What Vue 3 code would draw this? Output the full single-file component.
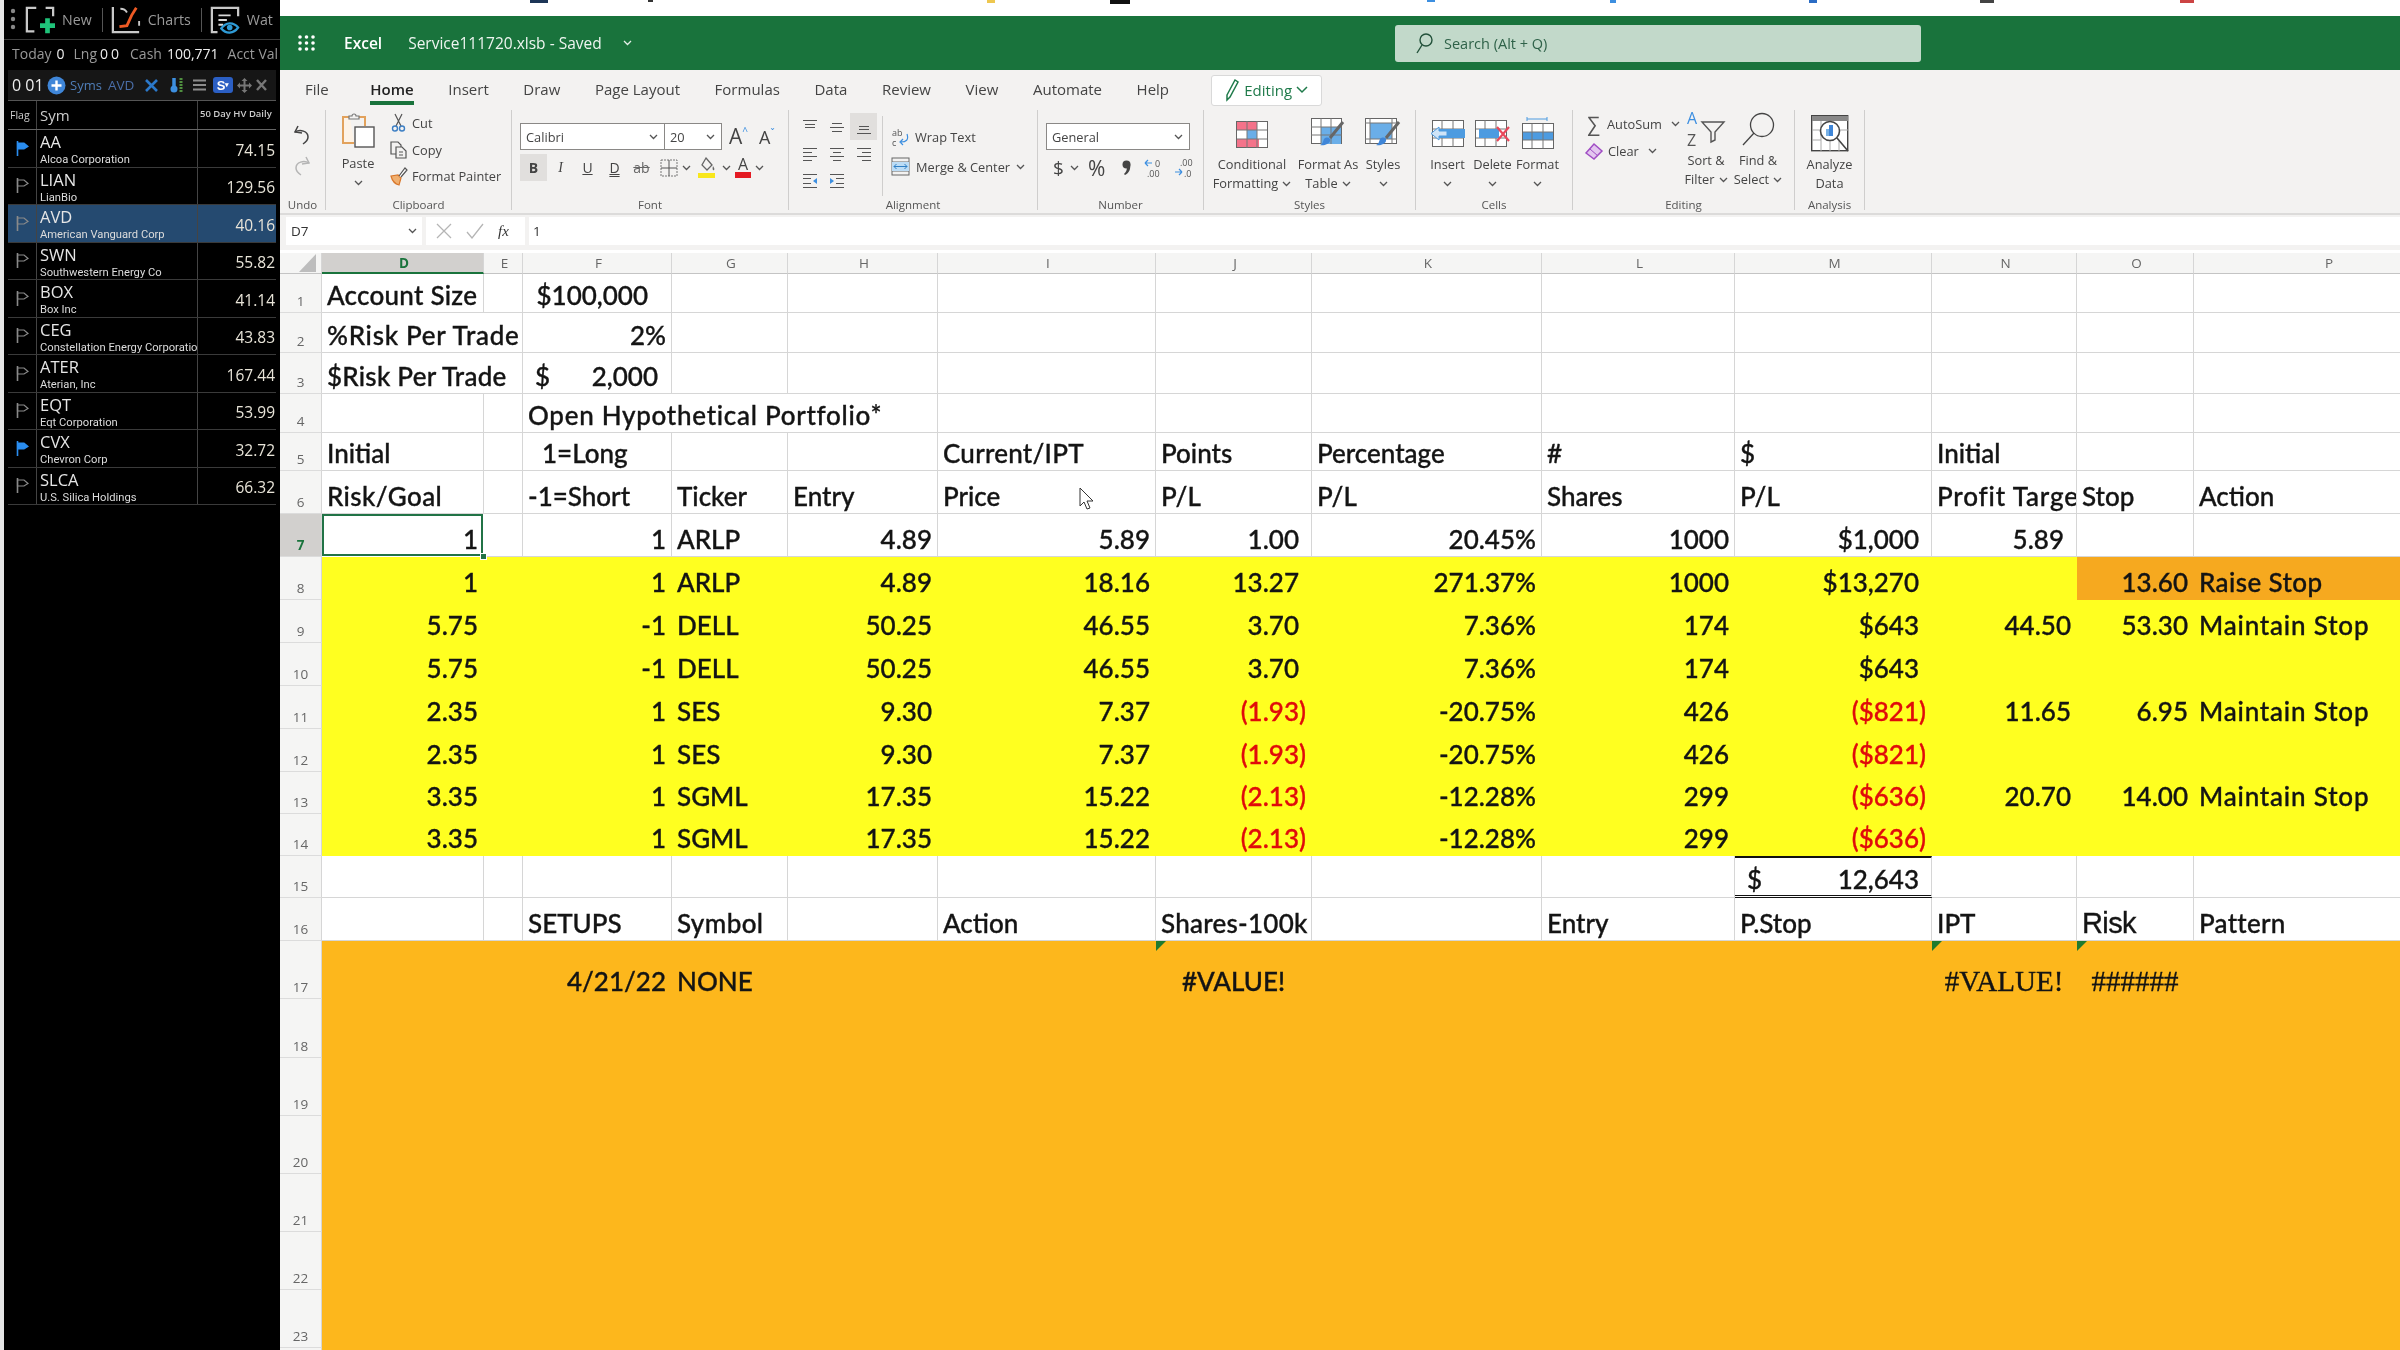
<template>
  <div class="screen">
    <aside class="side">
      <div class="side-tools">
        <svg class="grip" width="6" height="24" viewBox="0 0 6 24"><circle cx="3" cy="3" r="2.2"/><circle cx="3" cy="11" r="2.2"/><circle cx="3" cy="19" r="2.2"/></svg>
        <svg width="30" height="30" viewBox="0 0 32 32" fill="none"><path d="M12 3H2v25h8M22 3h8v9" stroke="#c9c9c9" stroke-width="2.4"/><path d="M24 14v16M16 22h16" stroke="#1fc47a" stroke-width="5"/></svg>
        <span class="tool-txt">New</span>
        <i class="tool-sep"></i>
        <svg width="30" height="30" viewBox="0 0 32 32" fill="none"><path d="M2 2v27h28" stroke="#c9c9c9" stroke-width="2.4"/><path d="M9 23l8-1 5-11 5-8" stroke="#ee5a24" stroke-width="3"/><path d="M10 4c4 0 6 2 7 4M30 17v5" stroke="#c9c9c9" stroke-width="2"/></svg>
        <span class="tool-txt">Charts</span>
        <i class="tool-sep"></i>
        <svg width="30" height="30" viewBox="0 0 32 32" fill="none"><path d="M8 29H2V3h28v9" stroke="#c9c9c9" stroke-width="2.4"/><path d="M9 11h13M9 16h9M9 21h5" stroke="#d8d8d8" stroke-width="2"/><path d="M12 25c5-7 13-7 18-1-5 7-13 7-18 1z" stroke="#2f9bd6" stroke-width="2.4"/><circle cx="21" cy="24" r="3" fill="#2f9bd6"/></svg>
        <span class="tool-txt">Wat</span>
      </div>
      <div class="side-status">
        <span>Today</span><b>0</b><span class="lng">Lng</span><b class="tight">0</b><b class="tight">0</b><span class="cash">Cash</span><b>100,771</b><span class="acct">Acct Val</span>
      </div>
      <div class="side-bar">
        <b class="counts">0 01</b>
        <svg width="19" height="19" viewBox="0 0 19 19"><circle cx="9.500" cy="9.500" r="9" fill="#3f86d8"/><path d="M9.500 4.500v10M4.500 9.500h10" stroke="#fff" stroke-width="2.400"/></svg>
        <span class="syms">Syms</span>
        <span class="avd">AVD</span>
        <svg class="bar-x" width="13" height="13" viewBox="0 0 13 13"><path d="M1 1l11 11M12 1L1 12" stroke="#2b78c9" stroke-width="2.600"/></svg>
        <svg class="therm" width="15" height="16" viewBox="0 0 15 16"><path d="M4 1v9" stroke="#3d8fe0" stroke-width="3.500"/><circle cx="4" cy="12" r="3.500" fill="#3d8fe0"/><path d="M11 1v14" stroke="#4f8f3f" stroke-width="3" stroke-dasharray="2 1"/></svg>
        <svg class="bar-lines" width="13" height="12" viewBox="0 0 13 12"><path d="M0 1.500h13M0 6h13M0 10.500h13" stroke="#8d8d8d" stroke-width="2"/></svg>
        <span class="s-btn">S<i>▾</i></span>
        <svg width="15" height="15" viewBox="0 0 15 15" fill="#777"><path d="M7.500 0l3 3h-6zM7.500 15l-3-3h6zM0 7.500l3-3v6zM15 7.500l-3 3v-6z"/><path d="M6.500 2h2v11h-2z"/><path d="M2 6.500h11v2H2z"/></svg>
        <svg width="11" height="12" viewBox="0 0 11 12"><path d="M1 1l9 10M10 1L1 11" stroke="#777" stroke-width="2.400"/></svg>
      </div>
      <div class="wl-table">
        <div class="wl-head wl-row">
          <div class="wl-flag wl-flagtxt">Flag</div>
          <div class="wl-sym wl-symtxt">Sym</div>
          <div class="wl-val wl-valtxt">50 Day HV Daily</div>
        </div>
        <div v-for="s in stocks" :key="s.sym" class="wl-row" :class="{ active: s.sym === 'AVD' }">
          <div class="wl-flag">
            <svg width="13" height="15" viewBox="0 0 13 15" fill="none">
              <path d="M1.500 0v15" :stroke="s.flag ? '#2a8df0' : '#8a8a8a'" stroke-width="1.600"/>
              <path d="M1.500 2H8l4 3.500L8 8H1.500z" :fill="s.flag ? '#2a8df0' : 'none'" :stroke="s.flag ? '#2a8df0' : '#8a8a8a'" stroke-width="1.200"/>
            </svg>
          </div>
          <div class="wl-sym">
            <div class="tick">{{ s.sym }}</div>
            <div class="cname">{{ s.name }}</div>
          </div>
          <div class="wl-val">{{ s.val }}</div>
        </div>
      </div>
    </aside>

    <main class="xl">
      <svg class="strip" width="2120" height="16" viewBox="0 0 2120 16">
        <rect x="250" y="0" width="18" height="3" fill="#1d3557"/>
        <rect x="368" y="0" width="5" height="2" fill="#333"/>
        <rect x="707" y="0" width="8" height="3" fill="#eec74f"/>
        <rect x="830" y="0" width="20" height="4" fill="#111"/>
        <rect x="1147" y="0" width="8" height="2" fill="#3d8fe0"/>
        <rect x="1330" y="0" width="6" height="3" fill="#3d8fe0"/>
        <rect x="1529" y="0" width="8" height="3" fill="#2b6cc4"/>
        <rect x="1700" y="0" width="14" height="3" fill="#444"/>
        <rect x="1900" y="0" width="14" height="3" fill="#c44"/>
      </svg>

      <header class="title">
        <svg class="waffle" width="17" height="16" viewBox="0 0 17 16" fill="#fff"><circle v-for="d in dots" :key="d[0] + '-' + d[1]" :cx="d[0]" :cy="d[1]" r="1.800"/></svg>
        <b class="app">Excel</b>
        <span class="doc">Service111720.xlsb  -  Saved</span>
        <Chev color="#e4efe8" class="doc-chev"/>
        <div class="search">
          <svg width="18" height="22" viewBox="0 0 18 22" fill="none" stroke="#22513a" stroke-width="1.400"><circle cx="11" cy="8" r="6"/><path d="M7 13l-5 8"/></svg>
          <span>Search (Alt + Q)</span>
        </div>
      </header>

      <nav class="tabs">
        <span v-for="t in tabs" :key="t" class="tab" :class="{ on: t === 'Home', file: t === 'File' }">{{ t }}</span>
        <span class="editing">
          <svg width="16" height="24" viewBox="0 0 16 24" fill="none" stroke="#1f7a4a" stroke-width="1.500"><path d="M3 17L11 2l3 2-8 15-3 3z"/></svg>
          Editing
          <svg width="12" height="8" viewBox="0 0 12 8" fill="none" stroke="#1f7a4a" stroke-width="1.500"><path d="M1 1l5 5 5-5"/></svg>
        </span>
      </nav>

      <section class="ribbon">
        <div class="grp g-undo">
          <div class="body col-c">
            <svg class="i-undo" width="18" height="20" viewBox="0 0 18 20" fill="none" stroke="#444" stroke-width="1.500"><path d="M5 1L2 7l7 1"/><path d="M2 7c5-3 13-1 13 5 0 3-2 5-5 7"/></svg>
            <svg class="i-redo" width="18" height="20" viewBox="0 0 18 20" fill="none" stroke="#b5b5b5" stroke-width="1.500"><path d="M13 1l3 6-7 1"/><path d="M16 7C11 4 3 6 3 12c0 3 2 5 5 7"/></svg>
          </div>
          <div class="lab">Undo</div>
        </div>

        <div class="grp g-clip">
          <div class="body row">
            <div class="big paste">
              <div class="ico">
                <svg width="33" height="35" viewBox="0 0 33 35" fill="none"><path d="M8 4H1v26h11" stroke="#e2a25c" stroke-width="2" fill="#fdf3e7"/><path d="M17 4h6v9" stroke="#e2a25c" stroke-width="2"/><path d="M7 6V3h3a2 2 0 0 1 4 0h3v3z" stroke="#777" fill="#f3f2f1" stroke-width="1.200"/><rect x="13" y="14" width="19" height="20" fill="#fff" stroke="#555" stroke-width="1.400"/></svg>
              </div>
              <span>Paste</span>
              <Chev class="chev-line"/>
            </div>
            <div class="small-list clip-list">
              <div class="small"><svg width="17" height="18" viewBox="0 0 17 18" fill="none"><path d="M5 0l6 12M12 0L6 12" stroke="#555" stroke-width="1.200"/><circle cx="5" cy="14.500" r="2.500" stroke="#3d7fc4" stroke-width="1.400"/><circle cx="12" cy="14.500" r="2.500" stroke="#3d7fc4" stroke-width="1.400"/></svg>Cut</div>
              <div class="small"><svg width="17" height="18" viewBox="0 0 17 18" fill="none" stroke="#555" stroke-width="1.200"><path d="M9 13H1V1h7l3 3v2"/><path d="M6 6h6l4 4v7H6z" fill="#f3f2f1"/><path d="M9 11h4M9 14h4"/></svg>Copy</div>
              <div class="small"><svg width="17" height="18" viewBox="0 0 17 18" fill="none"><path d="M1 9l7-1 3 3-2 7C5 17 2 13 1 9z" fill="#f0b070" stroke="#d9772a" stroke-width="1.200"/><path d="M9 9l6-8 2 2-6 7" fill="#fff" stroke="#555" stroke-width="1.200"/></svg>Format Painter</div>
            </div>
          </div>
          <div class="lab">Clipboard</div>
        </div>

        <div class="grp g-font">
          <div class="body">
            <div class="combo-row">
              <div class="combo c-font"><span>Calibri</span><Chev/></div>
              <div class="combo c-size"><span>20</span><Chev/></div>
              <span class="grow-a">A<sup>^</sup></span>
              <span class="shrink-a">A<sup>ˇ</sup></span>
            </div>
            <div class="fmt-row">
              <span class="fb on-b">B</span>
              <span class="fb it">I</span>
              <span class="fb un">U</span>
              <span class="fb dun">D</span>
              <span class="fb st">ab</span>
              <svg class="bord" width="18" height="18" viewBox="0 0 18 18" fill="none" stroke="#777"><path d="M1 1h16v16H1z" stroke-dasharray="2 1"/><path d="M9 1v16M1 9h16" stroke="#555"/></svg>
              <Chev/>
              <svg class="fill" width="20" height="24" viewBox="0 0 20 24" fill="none"><path d="M8 2l6 7-5 5-5-5z" stroke="#666" stroke-width="1.300"/><path d="M15 10c1 2 2 3 1 4s-2-1-1-4z" fill="#666"/><rect y="17" width="17" height="5" fill="#f8e71c"/></svg>
              <Chev/>
              <svg class="acol" width="16" height="24" viewBox="0 0 16 24"><text x="8" y="14" text-anchor="middle" class="acol-t">A</text><rect x="0" y="16" width="16" height="6" fill="#e41b23"/></svg>
              <Chev/>
            </div>
          </div>
          <div class="lab">Font</div>
        </div>

        <div class="grp g-align">
          <div class="body row">
            <div class="al-grid">
              <span class="al"><svg width="16" height="16" viewBox="0 0 16 16" stroke="#555"><path d="M1 1.500h14M3 5.500h10M3 8.500h10"/></svg></span>
              <span class="al"><svg width="16" height="16" viewBox="0 0 16 16" stroke="#555"><path d="M3 4.500h10M1 8.500h14M3 12.500h10"/></svg></span>
              <span class="al al-on"><svg width="16" height="16" viewBox="0 0 16 16" stroke="#555"><path d="M3 7.500h10M3 10.500h10M1 14.500h14"/></svg></span>
              <span class="al"><svg width="16" height="16" viewBox="0 0 16 16" stroke="#555"><path d="M1 2.500h14M1 6.500h9M1 10.500h14M1 14.500h9"/></svg></span>
              <span class="al"><svg width="16" height="16" viewBox="0 0 16 16" stroke="#555"><path d="M1 2.500h14M4 6.500h8M1 10.500h14M4 14.500h8"/></svg></span>
              <span class="al"><svg width="16" height="16" viewBox="0 0 16 16" stroke="#555"><path d="M1 2.500h14M6 6.500h9M1 10.500h14M6 14.500h9"/></svg></span>
              <span class="al"><svg width="16" height="16" viewBox="0 0 16 16" stroke="#555"><path d="M1 1.500h14M1 5.500h8M1 10.500h8M1 14.500h14"/><path d="M15 5l-4 3 4 3z" fill="#3d8fe0" stroke="none"/></svg></span>
              <span class="al"><svg width="16" height="16" viewBox="0 0 16 16" stroke="#555"><path d="M1 1.500h14M7 5.500h8M7 10.500h8M1 14.500h14"/><path d="M1 5l4 3-4 3z" fill="#3d8fe0" stroke="none"/></svg></span>
            </div>
            <i class="al-sep"></i>
            <div class="wrap-list">
              <div class="small wrap"><svg width="18" height="18" viewBox="0 0 18 18" fill="none"><text x="1" y="8" class="ab-t">ab</text><text x="1" y="18" class="ab-t">c</text><path d="M16 6c2 6-1 8-6 8m2-3l-3 3 3 3" stroke="#3d8fe0" stroke-width="1.200"/></svg>Wrap Text</div>
              <div class="small merge"><svg width="19" height="19" viewBox="0 0 19 19" fill="none"><rect x="1" y="1" width="17" height="17" stroke="#666"/><path d="M1 5h17M1 14h17" stroke="#666"/><rect x="1" y="5" width="17" height="9" fill="#bcdcf5"/><path d="M3 9.500h13M3 9.500l2.500-2.500M3 9.500L5.500 12M16 9.500L13.500 7M16 9.500L13.500 12" stroke="#2f7fc4"/></svg>Merge &amp; Center<Chev class="tight-chev"/></div>
            </div>
          </div>
          <div class="lab">Alignment</div>
        </div>

        <div class="grp g-num">
          <div class="body">
            <div class="combo-row">
              <div class="combo c-gen"><span>General</span><Chev/></div>
            </div>
            <div class="num-row">
              <span class="dollar">$</span><Chev/>
              <span class="pct">%</span>
              <svg class="comma" width="9" height="16" viewBox="0 0 9 16" fill="#444"><circle cx="4.500" cy="4.500" r="4"/><path d="M8 4c1 5-1 9-5 11l-1-1c2-2 3-4 3-7z"/></svg>
              <svg class="dec1" width="20" height="20" viewBox="0 0 20 20" fill="none"><path d="M1 5h7M1 5l3-3M1 5l3 3" stroke="#3d8fe0" stroke-width="1.200"/><text x="11" y="9" class="dec-t">0</text><text x="3" y="19" class="dec-t">.00</text></svg>
              <svg class="dec2" width="20" height="20" viewBox="0 0 20 20" fill="none"><text x="6" y="8" class="dec-t">.00</text><path d="M1 14h7M8 14l-3-3M8 14l-3 3" stroke="#3d8fe0" stroke-width="1.200"/><text x="10" y="19" class="dec-t">.0</text></svg>
            </div>
          </div>
          <div class="lab">Number</div>
        </div>

        <div class="grp g-styles">
          <div class="body row">
            <div class="big w-cond">
              <div class="ico"><svg width="32" height="27" viewBox="0 0 32 27"><rect x=".5" y=".5" width="31" height="26" fill="#fff" stroke="#666"/><path d="M1 1h20v8H1zM1 18h22v8H1z" fill="#f4738a"/><path d="M11 9h10v9H11z" fill="#6aaee8"/><path d="M11 0v27M21 0v27M1 9h30M1 18h30" stroke="#777" fill="none"/></svg></div>
              <span>Conditional</span>
              <span>Formatting<Chev/></span>
            </div>
            <div class="big w-table">
              <div class="ico"><svg width="34" height="30" viewBox="0 0 34 30"><rect x=".5" y=".5" width="30" height="25" fill="#fff" stroke="#666"/><path d="M10 9h20v17H10z" fill="#6aaee8"/><path d="M10 0v26M20 0v26M0 9h31M0 17h31" stroke="#777" fill="none"/><path d="M32 4L19 20" stroke="#666" stroke-width="3"/><path d="M13 21c3-3 7-1 6 2s-6 5-10 4c3-1 3-4 4-6z" fill="#3f86d8"/></svg></div>
              <span>Format As</span>
              <span>Table<Chev/></span>
            </div>
            <div class="big w-sty">
              <div class="ico"><svg width="36" height="30" viewBox="0 0 36 30"><rect x=".5" y=".5" width="31" height="25" fill="#fff" stroke="#666"/><path d="M5 5h22v16H5z" fill="#6aaee8"/><path d="M0 5h32M5 0v26M27 0v26M0 21h32" stroke="#777" fill="none"/><path d="M34 4L21 20" stroke="#666" stroke-width="3"/><path d="M15 21c3-3 7-1 6 2s-6 5-10 4c3-1 3-4 4-6z" fill="#3f86d8"/></svg></div>
              <span>Styles</span>
              <Chev class="chev-line"/>
            </div>
          </div>
          <div class="lab">Styles</div>
        </div>

        <div class="grp g-cells">
          <div class="body row">
            <div class="big w-cell">
              <div class="ico"><svg width="36" height="28" viewBox="0 0 36 28"><rect x="2.500" y=".5" width="31" height="26" fill="#fff" stroke="#666"/><path d="M12 0v27M23 0v27M3 9h31M3 18h31" stroke="#777" fill="none"/><path d="M8 9h27v9H8z" fill="#4d9be0"/><path d="M1 13.500L9 7v4h8v5H9v4z" fill="#cfe4f7" stroke="#4d9be0"/></svg></div>
              <span>Insert</span>
              <Chev class="chev-line"/>
            </div>
            <div class="big w-cell">
              <div class="ico"><svg width="36" height="28" viewBox="0 0 36 28"><rect x=".5" y=".5" width="31" height="26" fill="#fff" stroke="#666"/><path d="M10 0v27M21 0v27M1 9h31M1 18h31" stroke="#777" fill="none"/><path d="M4 9h20v9H4z" fill="#4d9be0"/><path d="M22 7l12 14M34 7L22 21" stroke="#e8475a" stroke-width="2.200"/></svg></div>
              <span>Delete</span>
              <Chev class="chev-line"/>
            </div>
            <div class="big w-cell">
              <div class="ico fmt-ico"><svg width="32" height="32" viewBox="0 0 32 32"><path d="M5 2h20M5 0v4M25 0v4" stroke="#4d9be0" fill="none"/><rect x=".5" y="6.500" width="31" height="25" fill="#fff" stroke="#666"/><path d="M1 15h30v8H1z" fill="#4d9be0"/><path d="M10 7v24M21 7v24M1 15h30M1 23h30" stroke="#777" fill="none"/></svg></div>
              <span>Format</span>
              <Chev class="chev-line"/>
            </div>
          </div>
          <div class="lab">Cells</div>
        </div>

        <div class="grp g-edit">
          <div class="body row">
            <div class="small-list edit-list">
              <div class="small"><span class="sigma">∑</span>AutoSum<Chev/></div>
              <div class="small"><svg width="18" height="18" viewBox="0 0 18 18" fill="none"><path d="M1 11l8-9 8 7-8 8z" fill="#e3c6ef" stroke="#a04dc4" stroke-width="1.500"/><path d="M5 7l8 7" stroke="#a04dc4"/></svg>Clear<Chev/></div>
            </div>
            <div class="big w-find up">
              <div class="ico"><svg width="38" height="34" viewBox="0 0 38 34" fill="none"><text x="0" y="12" class="az-a">A</text><text x="0" y="34" class="az-z">Z</text><path d="M15 10h22l-9 10v8l-4 2V20z" stroke="#555" stroke-width="1.400"/></svg></div>
              <span>Sort &amp;</span>
              <span>Filter<Chev/></span>
            </div>
            <div class="big w-find up">
              <div class="ico"><svg width="34" height="34" viewBox="0 0 34 34" fill="none" stroke="#444" stroke-width="1.300"><circle cx="21" cy="13" r="11.500"/><path d="M13 21L2 33"/></svg></div>
              <span>Find &amp;</span>
              <span>Select<Chev/></span>
            </div>
          </div>
          <div class="lab">Editing</div>
        </div>

        <div class="grp g-ana">
          <div class="body">
            <div class="big">
              <div class="ico"><svg width="38" height="38" viewBox="0 0 38 38" fill="none"><rect x=".7" y=".7" width="36" height="35" fill="#fff" stroke="#444" stroke-width="1.400"/><rect x="1" y="1" width="36" height="5" fill="#888"/><path d="M10 6v30M19 26v10M28 26v10M1 15h9M1 25h9M29 15h8" stroke="#aaa"/><circle cx="19" cy="16" r="9.500" stroke="#444" stroke-width="1.600" fill="#fff"/><path d="M26 23l11 13" stroke="#444" stroke-width="1.600"/><rect x="15" y="14" width="3" height="7" fill="#7ab2e6"/><rect x="18" y="10" width="4" height="11" fill="#3f86d8"/></svg></div>
              <span>Analyze</span>
              <span>Data</span>
            </div>
          </div>
          <div class="lab">Analysis</div>
        </div>
      </section>

      <div class="fbar">
        <div class="namebox"><span>D7</span><Chev/></div>
        <div class="fx-btns">
          <svg width="16" height="16" viewBox="0 0 16 16" fill="none" stroke="#b5b5b5" stroke-width="1.300"><path d="M1 1l14 14M15 1L1 15"/></svg>
          <svg width="18" height="16" viewBox="0 0 18 16" fill="none" stroke="#b5b5b5" stroke-width="1.300"><path d="M1 9l5 6L17 1"/></svg>
          <i class="fx">fx</i>
        </div>
        <div class="finput">1</div>
      </div>

      <div class="sheet">
        <div class="ch corner"><svg width="17" height="18" viewBox="0 0 17 18"><path d="M17 0v18H0z" fill="#bdbdbd"/></svg></div>
        <div v-for="c in COLS" :key="c" class="ch" :class="{ chsel: c === 'D' }">{{ c }}</div>

        <template v-for="r in rows" :key="r.n">
          <div class="rh" :class="{ rhsel: r.n === 7 }"><span>{{ r.n < 24 ? r.n : '' }}</span></div>
          <div
            v-for="c in r.cells"
            :key="r.n + c.col"
            class="cell"
            :class="[r.tone, c.cls, { red: c.text && c.text[0] === '(', spanned: c.span > 1 }]"
            :style="c.span > 1 ? { gridColumn: 'span ' + c.span } : null"
          >
            <i v-if="c.flag" class="err"></i>
            <template v-if="c.dollar">
              <span>$</span><span>{{ c.text }}</span>
            </template>
            <span v-else>{{ c.text }}</span>
            <i v-if="c.cls && c.cls.includes('sel')" class="handle"></i>
          </div>
        </template>
      </div>

      <svg class="pointer" width="16" height="24" viewBox="0 0 16 24"><path d="M1 1v18l4-4 3 7 3-1-3-7h6z" fill="#fff" stroke="#333"/></svg>
    </main>
  </div>
</template>

<script setup>
import { h } from 'vue'

// small dropdown arrow used all over the ribbon
const Chev = (props, { attrs }) =>
  h('svg', { width: 9, height: 6, viewBox: '0 0 9 6', fill: 'none', stroke: attrs.color || '#555', 'stroke-width': 1.3, class: attrs.class, style: 'flex:none;margin-left:4px' }, [
    h('path', { d: 'M1 1l3.500 3.500L8 1' })
  ])

const dots = []
for (const x of [2, 8.5, 15]) for (const y of [2, 8, 14]) dots.push([x, y])

const tabs = ['File', 'Home', 'Insert', 'Draw', 'Page Layout', 'Formulas', 'Data', 'Review', 'View', 'Automate', 'Help']

const stocks = [
  { sym: 'AA', name: 'Alcoa Corporation', val: '74.15', flag: true },
  { sym: 'LIAN', name: 'LianBio', val: '129.56' },
  { sym: 'AVD', name: 'American Vanguard Corp', val: '40.16' },
  { sym: 'SWN', name: 'Southwestern Energy Co', val: '55.82' },
  { sym: 'BOX', name: 'Box Inc', val: '41.14' },
  { sym: 'CEG', name: 'Constellation Energy Corporatio', val: '43.83' },
  { sym: 'ATER', name: 'Aterian, Inc', val: '167.44' },
  { sym: 'EQT', name: 'Eqt Corporation', val: '53.99' },
  { sym: 'CVX', name: 'Chevron Corp', val: '32.72', flag: true },
  { sym: 'SLCA', name: 'U.S. Silica Holdings', val: '66.32' }
]

const COLS = ['D', 'E', 'F', 'G', 'H', 'I', 'J', 'K', 'L', 'M', 'N', 'O', 'P']

// turn { D: 'text' | {text, cls, span, ...} } into a flat list, skipping spanned columns
function makeRow(n, tone, spec) {
  const cells = []
  let skip = 0
  for (const col of COLS) {
    if (skip > 0) { skip--; continue }
    const v = spec[col]
    const c = typeof v === 'object' && v ? { ...v, col } : { text: v || '', col }
    if (c.span > 1) skip = c.span - 1
    cells.push(c)
  }
  return { n, tone, cells }
}

const R = (text, cls = '') => ({ text, cls: 'right ' + cls })

function dataRow(n, tone, d) {
  const [D, F, G, H, I, J, K, L, M, N, O, P] = d
  const pad = v => (v && v[0] !== '(' ? 'paren' : '')
  return makeRow(n, tone, {
    D: R(D, n === 7 ? 'sel' : ''), F: R(F), G, H: R(H), I: R(I), J: R(J, pad(J)), K: R(K), L: R(L), M: R(M, pad(M)),
    N: R(N, n === 7 ? 'paren' : ''),
    O: R(O, n === 8 ? 'amber' : ''),
    P: { text: P, cls: n === 8 ? 'amber w4' : 'w8' }
  })
}

const rows = [
  makeRow(1, '', { D: { text: 'Account Size', cls: 'w2' }, F: { text: '$100,000', cls: 'right amt' } }),
  makeRow(2, '', { D: { text: '%Risk Per Trade', span: 2, cls: 'w7' }, F: R('2%') }),
  makeRow(3, '', { D: { text: '$Risk Per Trade', span: 2, cls: 'w2' }, F: { text: '2,000', dollar: true, cls: 'acct a3' } }),
  makeRow(4, '', { F: { text: 'Open Hypothetical Portfolio*', span: 3, cls: 'w7' } }),
  makeRow(5, 'hd', { D: 'Initial', F: { text: '1=Long', cls: 'long' }, I: { text: 'Current/IPT', cls: 'w2' }, J: 'Points', K: 'Percentage', L: '#', M: '$', N: 'Initial' }),
  makeRow(6, 'hd', { D: { text: 'Risk/Goal', cls: 'w4' }, F: '-1=Short', G: 'Ticker', H: 'Entry', I: 'Price', J: 'P/L', K: 'P/L', L: 'Shares', M: 'P/L', N: { text: 'Profit Targe', cls: 'w10' }, O: 'Stop', P: 'Action' }),
  dataRow(7, 'hd', ['1', '1', 'ARLP', '4.89', '5.89', '1.00', '20.45%', '1000', '$1,000', '5.89']),
  dataRow(8, 'yel', ['1', '1', 'ARLP', '4.89', '18.16', '13.27', '271.37%', '1000', '$13,270', '', '13.60', 'Raise Stop']),
  dataRow(9, 'yel', ['5.75', '-1', 'DELL', '50.25', '46.55', '3.70', '7.36%', '174', '$643', '44.50', '53.30', 'Maintain Stop']),
  dataRow(10, 'yel', ['5.75', '-1', 'DELL', '50.25', '46.55', '3.70', '7.36%', '174', '$643']),
  dataRow(11, 'yel', ['2.35', '1', 'SES', '9.30', '7.37', '(1.93)', '-20.75%', '426', '($821)', '11.65', '6.95', 'Maintain Stop']),
  dataRow(12, 'yel', ['2.35', '1', 'SES', '9.30', '7.37', '(1.93)', '-20.75%', '426', '($821)']),
  dataRow(13, 'yel', ['3.35', '1', 'SGML', '17.35', '15.22', '(2.13)', '-12.28%', '299', '($636)', '20.70', '14.00', 'Maintain Stop']),
  dataRow(14, 'yel', ['3.35', '1', 'SGML', '17.35', '15.22', '(2.13)', '-12.28%', '299', '($636)']),
  makeRow(15, '', { M: { text: '12,643', dollar: true, cls: 'acct total' } }),
  makeRow(16, 'hd', { F: 'SETUPS', G: { text: 'Symbol', cls: 'w4' }, I: 'Action', J: { text: 'Shares-100k', cls: 'w2' }, L: 'Entry', M: 'P.Stop', N: 'IPT', O: { text: 'Risk', cls: 'riskhd' }, P: { text: 'Pattern', cls: 'w2' } }),
  makeRow(17, 'org', {
    F: R('4/21/22'), G: 'NONE',
    J: { text: '#VALUE!', cls: 'center', flag: true },
    N: { text: '#VALUE!', cls: 'center serif', flag: true },
    O: { text: '######', cls: 'center serif', flag: true }
  }),
  ...[18, 19, 20, 21, 22, 23, 24].map(n => makeRow(n, 'org', {}))
]
</script>

<style>
html, body { margin: 0; background: #fff; }
</style>

<style scoped>
.screen {
  width: 2400px; height: 1350px; display: flex; overflow: hidden; position: relative;
  background: #fff; font-family: "Open Sans", "Liberation Sans", sans-serif;
  filter: blur(0.5px);
}

/* left watchlist */
.side { width: 276px; flex: none; background: #000; border-left: 4px solid #e6e6e6; color: #ddd; }
.side-tools { height: 40px; display: flex; align-items: center; gap: 7px; padding-left: 6px; border-bottom: 1px solid #3a3a3a; white-space: nowrap; box-sizing: border-box; }
.side-tools svg { flex: none; }
.grip { fill: #888; margin-right: 2px; }
.tool-txt { color: #9a9a9a; font-size: 14.200px; }
.tool-sep { width: 1px; height: 24px; background: #555; margin: 0 1px 0 3px; flex: none; }
.side-status { height: 27px; display: flex; align-items: center; gap: 5px; padding-left: 8px; font-size: 14px; color: #999; white-space: nowrap; overflow: hidden; }
.side-status b { font-weight: 400; color: #eee; }
.side-status .lng { margin-left: 4px; }
.side-status .tight { margin-left: -2px; }
.side-status .cash { margin-left: 6px; }
.side-status .acct { margin-left: 4px; }
.side-bar { margin: 3px 4px 0; height: 30px; background: #161616; display: flex; align-items: center; gap: 4px; padding-left: 4px; border-bottom: 1px solid #555; white-space: nowrap; box-sizing: content-box; }
.counts { font-weight: 400; color: #eee; font-size: 16px; width: 31px; flex: none; }
.syms { color: #4f7eb8; font-size: 13px; width: 31px; flex: none; }
.avd { color: #4a6ea8; font-size: 13.500px; width: 28px; margin-left: 3px; flex: none; }
.bar-x { margin-left: 5px; }
.therm { margin-left: 8px; }
.bar-lines { margin-left: 4px; }
.s-btn { background: #2b5fc4; color: #fff; font: 700 13px "Liberation Sans", sans-serif; border-radius: 3px; width: 20px; height: 16px; display: flex; align-items: center; justify-content: center; margin-left: 3px; flex: none; }
.s-btn i { font-size: 7px; font-style: normal; }

.wl-table { margin: 0 0 0 4px; width: 268px; }
.wl-row { display: grid; grid-template-columns: 29px 161px 78px; height: 37.500px; border-bottom: 1px solid #3a3a3a; box-sizing: border-box; }
.wl-head { height: 29px; border-bottom-color: #666; }
.wl-row.active { background: #254a70; }
.wl-flag { border-right: 1px solid #444; display: flex; align-items: center; padding-left: 8px; box-sizing: border-box; }
.wl-sym { border-right: 1px solid #444; padding-left: 3px; overflow: hidden; white-space: nowrap; }
.wl-val { display: flex; align-items: center; justify-content: flex-end; font-size: 15.500px; color: #e8e4d8; padding: 3px 1px 0 0; }
.wl-flagtxt { font-size: 10.500px; color: #ccc; padding-left: 2px; }
.wl-symtxt { font-size: 15px; color: #ccc; line-height: 29px; }
.wl-valtxt { font-size: 9.500px; font-weight: 600; color: #ccc; justify-content: flex-start; padding: 0 0 4px 2px; white-space: nowrap; }
.tick { font-size: 16.500px; line-height: 20px; color: #e6e6e6; margin-top: 2px; }
.cname { font: 11.200px/15px Roboto, sans-serif; color: #dcdcdc; }

/* excel */
.xl { flex: 1; min-width: 0; display: flex; flex-direction: column; overflow: hidden; }
.strip { display: block; flex: none; }
.title { height: 54px; flex: none; background: #19733c; display: flex; align-items: center; color: #fff; }
.waffle { margin-left: 18px; }
.app { font-size: 15.500px; font-weight: 600; margin-left: 29px; }
.doc { font-size: 15.500px; margin-left: 26px; white-space: pre; color: #eef5f0; }
.doc-chev { margin-left: 21px !important; }
.search { margin-left: auto; margin-right: 479px; width: 526px; height: 37px; background: #c2d9ca; border-radius: 3px; display: flex; align-items: center; gap: 11px; padding-left: 20px; box-sizing: border-box; color: #2f6249; font-size: 14.500px; }

.tabs { height: 40px; flex: none; background: #f3f2f1; display: flex; align-items: center; gap: 34.600px; padding: 0 0 3px 25px; box-sizing: border-box; font-size: 15px; color: #444; position: relative; white-space: nowrap; }
.tab { line-height: 36px; position: relative; }
.tab.file { margin-right: 7px; }
.tab.on { color: #222; font-weight: 600; }
.tab.on::after { content: ""; position: absolute; left: 0; right: 0; bottom: 2px; height: 4px; background: #19733c; }
.editing { width: 111px; height: 31px; background: #fff; border: 1px solid #d9d9d9; border-radius: 3px; display: flex; align-items: center; justify-content: center; gap: 4px; color: #1f7a4a; box-sizing: border-box; margin: 3px 0 0 7px; }

.ribbon { height: 103px; flex: none; background: #f3f2f1; border-bottom: 2px solid #dcdbda; display: flex; font-size: 12.800px; color: #444; box-sizing: content-box; }
.ribbon svg { overflow: visible; }
.grp { display: flex; flex-direction: column; border-right: 1px solid #cfcecd; margin-bottom: 3px; box-sizing: border-box; flex: none; }
.body { flex: 1; min-height: 0; }
.row { display: flex; }
.lab { height: 14px; line-height: 18px; text-align: center; font-size: 11.500px; color: #555; }
.g-undo { width: 46px; }
.g-clip { width: 186px; }
.g-font { width: 277px; }
.g-align { width: 249px; }
.g-num { width: 166px; }
.g-styles { width: 212px; }
.g-cells { width: 157px; }
.g-edit { width: 222px; }
.g-ana { width: 70px; }

.col-c { display: flex; flex-direction: column; align-items: center; }
.i-undo { margin: 15px 2px 0 0; }
.i-redo { margin: 11px 2px 0 0; }

.big { display: flex; flex-direction: column; align-items: center; line-height: 19px; white-space: nowrap; flex: none; }
.big .ico { height: 44px; display: flex; align-items: flex-end; padding-bottom: 6px; box-sizing: border-box; }
.g-styles .ico, .g-cells .ico, .g-ana .ico { height: 45px; padding-bottom: 7px; }
.big span { display: flex; align-items: center; }
.chev-line { margin: 7px 0 0 !important; }
.paste { width: 50px; margin-left: 7px; }
.small-list { margin-left: 7px; }
.clip-list .small { height: 26.500px; }
.small { height: 27px; display: flex; align-items: center; gap: 5px; white-space: nowrap; }

.combo-row { display: flex; align-items: center; margin-top: 13px; height: 27px; }
.g-font .body, .g-num .body { padding-left: 8px; }
.combo { height: 27px; background: #fff; border: 1px solid #8a8886; display: flex; align-items: center; justify-content: space-between; padding: 0 6px 0 5px; box-sizing: border-box; flex: none; }
.c-font { width: 145px; }
.c-size { width: 58px; margin-left: -1px; }
.c-gen { width: 144px; }
.grow-a { font-size: 21px; margin-left: 7px; line-height: 1; }
.shrink-a { font-size: 18px; margin-left: 11px; line-height: 1; }
.grow-a sup, .shrink-a sup { font-size: 10px; color: #3d8fe0; vertical-align: top; line-height: 1; }
.fmt-row { display: flex; align-items: center; height: 27px; margin-top: 4px; }
.fb { width: 27px; height: 27px; display: flex; align-items: center; justify-content: center; font: 14px "Liberation Serif", serif; flex: none; }
.on-b { background: #e1dfdd; font: 700 14px "Open Sans", sans-serif; }
.it { font-style: italic; }
.un { text-decoration: underline; font-family: "Open Sans", sans-serif; }
.dun { text-decoration: underline double; font-family: "Open Sans", sans-serif; }
.st { text-decoration: line-through; font-family: "Open Sans", sans-serif; color: #666; }
.bord { margin-left: 5px; }
.fill { margin-left: 7px; }
.acol { margin-left: 4px; }
.acol-t { font: 16px "Open Sans", sans-serif; fill: #444; }

.al-grid { display: grid; grid-template-columns: repeat(3, 27px); grid-auto-rows: 27px; margin: 3px 0 0 7px; align-self: flex-start; }
.al { display: flex; align-items: center; justify-content: center; }
.al-on { background: #e1dfdd; }
.al-sep { width: 1px; height: 80px; margin: 6px 0 0 5px; background: #cfcecd; flex: none; }
.wrap-list { margin-left: 8px; }
.wrap { margin-top: 13px; gap: 6px; }
.merge { margin-top: 3px; gap: 6px; }
.tight-chev { margin-left: 0 !important; }
.ab-t { font: 9px "Open Sans", sans-serif; fill: #555; }

.num-row { display: flex; align-items: center; height: 27px; margin-top: 4px; padding-left: 7px; }
.dollar { font-size: 19px; width: 13px; }
.pct { font-size: 21px; margin-left: 9px; width: 24px; }
.comma { margin-left: 10px; }
.dec1 { margin-left: 13px; }
.dec2 { margin-left: 10px; }
.dec-t { font: 9px "Open Sans", sans-serif; fill: #555; }

.g-styles .body { padding-left: 3px; }
.w-cond { width: 90px; }
.w-table { width: 62px; }
.w-sty { width: 48px; }
.g-cells .body { padding-left: 9px; }
.w-cell { width: 45px; }
.g-cells .fmt-ico { padding-bottom: 6px; }
.edit-list { width: 95px; margin-left: 12px; flex: none; }
.sigma { font-size: 20px; width: 17px; line-height: 1; text-align: center; color: #555; }
.w-find { width: 52px; }
.up .ico { height: 41px; padding-bottom: 5px; }
.az-a { font: 16px "Open Sans", sans-serif; fill: #3d8fe0; }
.az-z { font: 16px "Open Sans", sans-serif; fill: #555; }
.g-ana .ico { padding-bottom: 2px; }

.fbar { height: 35px; flex: none; background: #f3f2f1; display: flex; padding: 2px 0 5px 6px; gap: 4px; box-sizing: border-box; font-size: 13.500px; color: #333; }
.namebox { width: 136px; background: #fff; display: flex; align-items: center; justify-content: space-between; padding: 0 5px; box-sizing: border-box; flex: none; }
.fx-btns { width: 99px; background: #fff; display: flex; align-items: center; gap: 14px; padding-left: 10px; box-sizing: border-box; flex: none; }
.fx { font: italic 15px "Liberation Serif", serif; }
.finput { flex: 1; background: #fff; display: flex; align-items: center; padding-left: 4px; }

.sheet {
  margin-top: 3px; flex: none; display: grid;
  grid-template-columns: 42px 162px 39px 149px 116px 150px 218px 156px 230px 193px 197px 145px 117px 268px;
  grid-template-rows: 21px 39px 40px 41px 39px 38px 43px 43px 43px 43px 43px 43px 43px 42px 42px 42px 43px 58px 59px 58px 58px 58px 58px 58px 40px;
  font: 500 26px/32px Lato, "Liberation Sans", sans-serif; color: #141414;
  background: #fff; -webkit-text-stroke: 0.35px currentColor;
}
.ch { background: #f5f5f4; border-right: 1px solid #d6d6d6; border-bottom: 1px solid #c4c4c4; font: 13.500px/20px "Open Sans", sans-serif; color: #666; text-align: center; box-sizing: border-box; padding-left: 3px; -webkit-text-stroke: 0; }
.corner { display: flex; justify-content: flex-end; align-items: flex-end; padding: 0 5px 1px 0; }
.chsel { background: #d2d0ce; color: #19733c; font-weight: 700; border-bottom: 2px solid #19733c; }
.rh { background: #f5f5f4; border-bottom: 1px solid #dcdcdc; border-right: 1px solid #d6d6d6; font: 13.500px/18px "Open Sans", sans-serif; color: #666; display: flex; align-items: flex-end; justify-content: center; padding-bottom: 2px; box-sizing: border-box; -webkit-text-stroke: 0; }
.rhsel { background: #d2d0ce; color: #19733c; font-weight: 700; }

.cell { border-right: 1px solid #d6d6d6; border-bottom: 1px solid #d6d6d6; display: flex; align-items: flex-end; padding: 0 5px 1.500px; box-sizing: border-box; overflow: hidden; white-space: nowrap; position: relative; }
.cell.spanned { overflow: visible; }
.right { justify-content: flex-end; }
.center { justify-content: center; }
.paren { padding-right: 12px; }
.amt { padding-right: 23px; }
.long { padding-left: 19px; }
.acct { justify-content: space-between; }
.a3 { padding-left: 12px; padding-right: 13px; }
.total { border-top: 2px solid #111; border-bottom: 3px double #111; padding: 0 12px 0 12px; }
.w2 { letter-spacing: 0.25px; }
.w4 { letter-spacing: 0.4px; }
.w7 { letter-spacing: 0.72px; }
.w8 { letter-spacing: 0.82px; }
.w10 { letter-spacing: 0.85px; padding-right: 0; }
.yel { background: #ffff20; border-color: transparent; }
.org { background: #fdb71c; border-color: transparent; }
.amber { background: #f6a91f; border-color: transparent; }
.red { color: #e00b0b; }
.riskhd { font: 29px/32px "Liberation Sans", sans-serif; letter-spacing: -0.6px; }
.serif { font: 29px/32px "Liberation Serif", serif; }
.sel { box-shadow: inset 0 0 0 2px #217346; border-color: transparent; overflow: visible; }
.handle { position: absolute; right: -4px; bottom: -4px; width: 7px; height: 7px; background: #217346; border: 1px solid #fff; box-sizing: border-box; z-index: 2; }
.err { position: absolute; left: 0; top: 0; width: 0; height: 0; border-top: 10px solid #1f7a2e; border-right: 10px solid transparent; }

.pointer { position: absolute; left: 1079px; top: 487px; z-index: 3; }
</style>
